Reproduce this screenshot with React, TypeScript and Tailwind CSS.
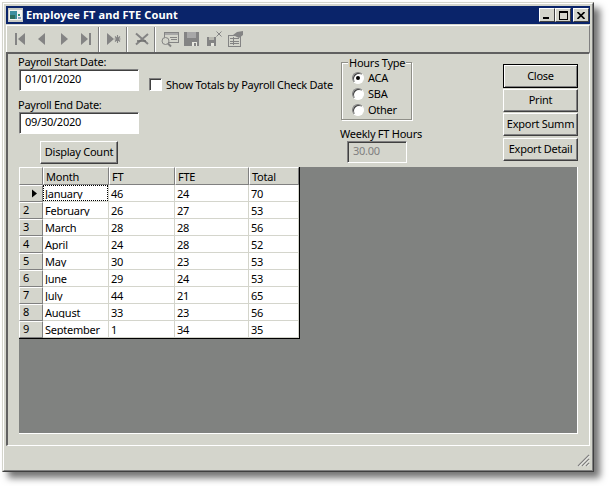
import React from "react";

const rows = [
  ["January", "46", "24", "70"],
  ["February", "26", "27", "53"],
  ["March", "28", "28", "56"],
  ["April", "24", "28", "52"],
  ["May", "30", "23", "53"],
  ["June", "29", "24", "53"],
  ["July", "44", "21", "65"],
  ["August", "33", "23", "56"],
  ["September", "1", "34", "35"],
];

const I = "#848484";

function TIcon({ w, children }: { w: number; children: React.ReactNode }) {
  return (
    <svg width={w} height={18} viewBox={`0 0 ${w} 18`} className="shrink-0" shapeRendering="crispEdges">
      {children}
    </svg>
  );
}

function Sep() {
  return <div className="w-[2px] h-[25px] shrink-0 border-l border-l-[#808080] border-r border-r-white" />;
}

function Toolbar() {
  return (
    <div className="h-[27px] flex items-center pl-[8px] border-l border-l-white border-t border-t-white border-r border-r-[#808080]">
      <div className="flex items-center h-[25px] w-full">
        <TIcon w={12}>
          <rect x="0" y="3" width="2" height="12" fill={I} />
          <polygon points="10,3 10,15 3,9" fill={I} shapeRendering="geometricPrecision" />
        </TIcon>
        <div className="w-[11px]" />
        <TIcon w={8}>
          <polygon points="7,3 7,15 0,9" fill={I} shapeRendering="geometricPrecision" />
        </TIcon>
        <div className="w-[14px]" />
        <TIcon w={8}>
          <polygon points="1,3 1,15 8,9" fill={I} shapeRendering="geometricPrecision" />
        </TIcon>
        <div className="w-[12px]" />
        <TIcon w={12}>
          <polygon points="1,3 1,15 8,9" fill={I} shapeRendering="geometricPrecision" />
          <rect x="9" y="3" width="2" height="12" fill={I} />
        </TIcon>
        <div className="w-[6px]" />
        <Sep />
        <div className="w-[6px]" />
        <TIcon w={16}>
          <polygon points="1,3 1,15 8,9" fill={I} shapeRendering="geometricPrecision" />
          <path d="M11.5 5v8M8.5 9h6M9 6.5l5 5M14 6.5l-5 5" stroke={I} strokeWidth="1.1" shapeRendering="geometricPrecision" />
        </TIcon>
        <div className="w-[4px]" />
        <Sep />
        <div className="w-[6px]" />
        <TIcon w={16}>
          <path d="M2 3.5L14 14M14 4L2 14.5" stroke={I} strokeWidth="2" shapeRendering="geometricPrecision" />
          <path d="M3 11h9" stroke="#6e6e6e" strokeWidth="1.5" shapeRendering="geometricPrecision" />
        </TIcon>
        <div className="w-[4px]" />
        <Sep />
        <div className="w-[5px]" />
        <TIcon w={18}>
          <rect x="3.5" y="2.5" width="14" height="10" fill="none" stroke={I} />
          <rect x="4" y="3" width="13" height="2" fill="#a8a8a8" />
          <path d="M9 7h7M10 9h6" stroke={I} />
          <circle cx="4.5" cy="11" r="3.5" fill="#d4d5cc" stroke={I} shapeRendering="geometricPrecision" />
          <path d="M7 13.5L10 16.5" stroke={I} strokeWidth="2" shapeRendering="geometricPrecision" />
        </TIcon>
        <div className="w-[5px]" />
        <TIcon w={16}>
          <rect x="0" y="2" width="15" height="14" fill={I} />
          <rect x="3" y="2" width="9" height="6" fill="#a8a8a8" />
          <rect x="8" y="12" width="5" height="4" fill="#e8e8e0" />
          <rect x="10" y="13" width="2" height="3" fill={I} />
        </TIcon>
        <div className="w-[6px]" />
        <TIcon w={17}>
          <rect x="1" y="7" width="9" height="9" fill={I} />
          <rect x="3" y="7" width="5" height="3" fill="#b8b8b0" />
          <rect x="5" y="13" width="3" height="3" fill="#e8e8e0" />
          <path d="M10.5 1.5l5 5M15.5 1.5l-5 5" stroke={I} strokeWidth="1" shapeRendering="geometricPrecision" />
        </TIcon>
        <div className="w-[5px]" />
        <TIcon w={17}>
          <rect x="0.5" y="5.5" width="12" height="11" fill="none" stroke={I} />
          <path d="M2 8.5h9M2 11h9M2 13.5h9M5 7v8" stroke={I} />
          <polygon points="5,5 9,2 15,1 15,5 11,8" fill={I} shapeRendering="geometricPrecision" />
        </TIcon>
      </div>
    </div>
  );
}

function WinBtn({ children, ml }: { children: React.ReactNode; ml: string }) {
  return (
    <div
      className={`${ml} w-[16px] h-[14px] flex items-center justify-center bg-[#d4d5cc] border border-t-white border-l-white border-r-[#404040] border-b-[#404040]`}
    >
      {children}
    </div>
  );
}

function Btn({ label, primary, w, h, mt }: { label: string; primary?: boolean; w: string; h: string; mt?: string }) {
  return (
    <div
      className={`${w} ${h} ${mt ?? ""} flex items-center justify-center text-black ${
        primary
          ? "border border-black shadow-[inset_1px_1px_0_white,inset_-1px_-1px_0_#808080]"
          : "border border-t-white border-l-white border-r-[#404040] border-b-[#404040] shadow-[inset_-1px_-1px_0_#808080]"
      }`}
    >
      {label}
    </div>
  );
}

function Radio({ checked, label }: { checked?: boolean; label: string }) {
  return (
    <div className="flex items-center h-[16px] pl-[10px]">
      <div className="w-[12px] h-[12px] rounded-full bg-white border border-t-[#808080] border-l-[#808080] border-r-white border-b-white shadow-[inset_1px_1px_0_#404040] flex items-center justify-center shrink-0">
        {checked && <div className="w-[4px] h-[4px] rounded-full bg-black" />}
      </div>
      <span className="ml-[4px]">{label}</span>
    </div>
  );
}

function Sunken({ value, w, mt, ml, disabled }: { value: string; w: string; mt?: string; ml?: string; disabled?: boolean }) {
  return (
    <div
      className={`${w} h-[22px] ${mt ?? ""} ${ml ?? ""} flex items-center pl-[5px] pb-[1px] border border-t-[#808080] border-l-[#808080] border-r-white border-b-white shadow-[inset_1px_1px_0_#404040] ${
        disabled ? "bg-[#d4d5cc] text-[#808080]" : "bg-white text-black"
      }`}
    >
      {value}
    </div>
  );
}

function Cell({ w, children, focus, clip }: { w: string; children?: React.ReactNode; focus?: boolean; clip?: boolean }) {
  return (
    <div className={`${w} h-[17px] border-r border-b border-[#d4d5cc] shrink-0`}>
      {focus ? (
        <div className="h-[16px] border border-dotted border-black">
          <div className="h-[13px] overflow-hidden leading-[16px] pl-[1px] whitespace-nowrap">{children}</div>
        </div>
      ) : (
        <div className={`h-[14px] leading-[18px] whitespace-nowrap pl-[2px] ${clip ? "overflow-hidden" : ""}`}>
          {children}
        </div>
      )}
    </div>
  );
}

function Header({ w, children }: { w: string; children?: React.ReactNode }) {
  return (
    <div className={`${w} h-[18px] shrink-0 bg-[#d4d5cc] pl-[2px] leading-[17px] border-t border-l border-t-white border-l-white border-r border-b border-r-[#808080] border-b-[#808080]`}>
      {children}
    </div>
  );
}

function RowHead({ children }: { children?: React.ReactNode }) {
  return (
    <div className="w-[24px] h-[17px] shrink-0 bg-[#d4d5cc] pl-[3px] border-t border-l border-t-white border-l-white border-r border-b border-r-[#808080] border-b-[#808080] flex items-center">
      {children}
    </div>
  );
}

export default function App() {
  return (
    <div
      className="w-[609px] h-[486px] bg-white pl-[2px] pt-[2px] text-[11px] tracking-[-0.25px] text-black overflow-hidden"
      style={{ fontFamily: '"Noto Sans", sans-serif' }}
    >
      <div className="w-[592px] h-[470px] bg-[#d4d5cc] border border-t-[#d4d5cc] border-l-[#d4d5cc] border-r-[#404040] border-b-[#404040] shadow-[6px_6px_7px_rgba(0,0,0,0.55)]">
        <div className="h-full border border-t-white border-l-white border-r-[#808080] border-b-[#808080] p-[2px] flex flex-col">
          {/* Title bar */}
          <div className="h-[18px] shrink-0 bg-[#0a246a] flex items-center pl-[2px] pr-[1px]">
            <svg width="15" height="14" viewBox="0 0 15 14" className="shrink-0" shapeRendering="crispEdges">
              <rect x="0" y="0" width="15" height="14" fill="#c8cac4" />
              <rect x="1" y="2" width="13" height="10" fill="#f4f4f0" />
              <rect x="2" y="3" width="7" height="8" fill="#3f8f9f" />
              <rect x="2" y="7" width="5" height="4" fill="#2f6f5f" />
              <rect x="10" y="6" width="2" height="2" fill="#2f8f6f" />
              <rect x="10" y="9" width="3" height="2" fill="#8fa0c0" />
            </svg>
            <span className="ml-[3px] text-white font-bold tracking-[0.1px] whitespace-nowrap">Employee FT and FTE Count</span>
            <div className="ml-auto flex">
              <WinBtn ml="">
                <div className="w-[6px] h-[2px] bg-black mt-[6px] mr-[2px]" />
              </WinBtn>
              <WinBtn ml="">
                <div className="w-[9px] h-[9px] border border-black border-t-2" />
              </WinBtn>
              <WinBtn ml="ml-[2px]">
                <svg width="8" height="7" viewBox="0 0 8 7">
                  <path d="M0.5 0L7.5 7M7.5 0L0.5 7" stroke="#000" strokeWidth="1.6" />
                </svg>
              </WinBtn>
            </div>
          </div>

          {/* Toolbar */}
          <div className="mt-[1px] shrink-0">
            <Toolbar />
          </div>

          {/* Main sunken panel */}
          <div className="flex-1 flex flex-col border-t-2 border-t-[#606060] border-l-2 border-l-[#606060] border-r border-r-white border-b border-b-white">
            <div className="h-[113px] shrink-0 flex pl-[10px]">
              <div className="w-[121px] shrink-0">
                <div className="h-[13px] mt-[1px] leading-[13px]">Payroll Start Date:</div>
                <Sunken value="01/01/2020" w="w-[120px]" mt="mt-[1px]" ml="ml-[1px]" />
                <div className="h-[13px] mt-[7px] leading-[13px]">Payroll End Date:</div>
                <Sunken value="09/30/2020" w="w-[120px]" mt="mt-[1px]" ml="ml-[1px]" />
                <Btn label="Display Count" w="w-[78px]" h="h-[23px]" mt="mt-[7px] ml-[22px]" />
              </div>
              <div className="w-[191px] shrink-0 ml-[10px] pt-[24px] flex items-start">
                <div className="w-[13px] h-[13px] bg-white border border-t-[#808080] border-l-[#808080] border-r-white border-b-white shadow-[inset_1px_1px_0_#404040] shrink-0" />
                <span className="ml-[4px] leading-[13px] whitespace-nowrap">Show Totals by Payroll Check Date</span>
              </div>
              <div className="w-[82px] shrink-0 pt-[8px]">
                <div className="ml-[1px] w-[71px] h-[58px] border border-[#8f8f88] shadow-[inset_1px_1px_0_white,1px_1px_0_white]">
                  <div className="w-fit -mt-[7px] ml-[6px] px-[1px] bg-[#d4d5cc] leading-[13px]">Hours Type</div>
                  <div className="mt-[1px]">
                    <Radio checked label="ACA" />
                    <Radio label="SBA" />
                    <Radio label="Other" />
                  </div>
                </div>
                <div className="mt-[7px] leading-[13px] whitespace-nowrap">Weekly FT Hours</div>
                <Sunken value="30.00" w="w-[60px]" mt="mt-[1px]" ml="ml-[7px]" disabled />
              </div>
              <div className="ml-[81px] w-[75px] pt-[10px] shrink-0">
                <Btn primary label="Close" w="w-[75px]" h="h-[24px]" />
                <Btn label="Print" w="w-[75px]" h="h-[23px]" mt="mt-[1px]" />
                <Btn label="Export Summ" w="w-[75px]" h="h-[23px]" mt="mt-[1px]" />
                <Btn label="Export Detail" w="w-[75px]" h="h-[23px]" mt="mt-[2px]" />
              </div>
            </div>

            {/* Data grid area */}
            <div className="ml-[11px] w-[559px] h-[267px] shrink-0 bg-[#808280] border-r border-b border-r-white border-b-white">
              <div className="w-[281px] border-r border-b border-r-black border-b-black bg-white">
                <div className="flex">
                  <Header w="w-[24px]" />
                  <Header w="w-[66px]">Month</Header>
                  <Header w="w-[66px]">FT</Header>
                  <Header w="w-[74px]">FTE</Header>
                  <Header w="w-[50px]">Total</Header>
                </div>
                {rows.map((r, i) => (
                  <div key={r[0]} className="flex">
                    <RowHead>
                      {i === 0 ? (
                        <svg width="7" height="9" viewBox="0 0 7 9" className="ml-[8px]">
                          <polygon points="1,0.5 6,4.5 1,8.5" fill="#000" />
                        </svg>
                      ) : (
                        i + 1
                      )}
                    </RowHead>
                    <Cell w="w-[66px]" focus={i === 0} clip>{r[0]}</Cell>
                    <Cell w="w-[66px]">{r[1]}</Cell>
                    <Cell w="w-[74px]">{r[2]}</Cell>
                    <Cell w="w-[50px]">{r[3]}</Cell>
                  </div>
                ))}
              </div>
            </div>
          </div>

          {/* Status bar */}
          <div className="h-[22px] shrink-0 flex justify-end items-end pb-[1px]">
            <svg width="13" height="13" viewBox="0 0 13 13" shapeRendering="geometricPrecision">
              <path d="M1 12L12 1M5 12L12 5M9 12L12 9" stroke="#808080" strokeWidth="1.2" />
              <path d="M2 12.5L12.5 2M6 12.5L12.5 6M10 12.5L12.5 10" stroke="#ffffff" strokeWidth="0.8" />
            </svg>
          </div>
        </div>
      </div>
    </div>
  );
}
